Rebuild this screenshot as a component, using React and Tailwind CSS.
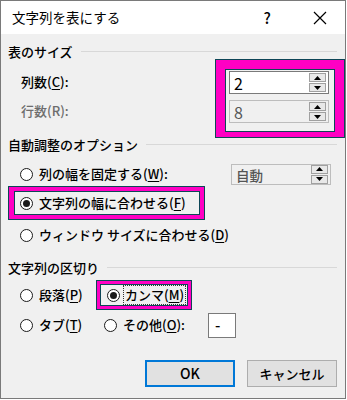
import React from "react";

const U = ({ children }) => <span className="underline underline-offset-2">{children}</span>;

function Radio({ checked }) {
  return (
    <span className="flex items-center justify-center w-[13px] h-[13px] rounded-full border-[1.5px] border-[#1a1a1a] bg-white shrink-0">
      {checked ? <span className="w-[7px] h-[7px] rounded-full bg-[#1a1a1a]" /> : null}
    </span>
  );
}

function SpinButtons() {
  return (
    <div className="flex flex-col gap-[1px] w-[17px] mr-[2px]">
      <div className="flex items-center justify-center h-[9px] border border-[#a0a0a0] bg-[#e8e8e8]">
        <svg width="7" height="4" viewBox="0 0 7 4"><polygon points="0,4 7,4 3.5,0" fill="#000" /></svg>
      </div>
      <div className="flex items-center justify-center h-[9px] border border-[#a0a0a0] bg-[#e8e8e8]">
        <svg width="7" height="4" viewBox="0 0 7 4"><polygon points="0,0 7,0 3.5,4" fill="#000" /></svg>
      </div>
    </div>
  );
}

function Spin({ value, disabled, h = "h-[23px]" }) {
  return (
    <div
      className={
        "flex items-center w-[100px] " + h + " border " +
        (disabled ? "border-[#bdbdbd] bg-[#f0f0f0] text-[#555]" : "border-[#7a7a7a] bg-white text-black")
      }
    >
      <span className="flex-1 pl-[4px] text-[16px] leading-none font-normal">{value}</span>
      <SpinButtons />
    </div>
  );
}

function GroupHeader({ children }) {
  return (
    <div className="flex items-center h-[16px] pr-[8px]">
      <span className="text-[13px] leading-none whitespace-nowrap">{children}</span>
      <span className="flex-1 h-px bg-[#d8d8d8] ml-[8px]" />
    </div>
  );
}

export default function App() {
  return (
    <div className="w-[347px] h-[400px] bg-white font-['Noto_Sans_CJK_JP',sans-serif] font-medium text-black">
      <div className="w-[346px] h-[399px] border border-[#7a7a7a] flex flex-col bg-[#f0f0f0]">
        {/* Title bar */}
        <div className="flex items-center h-[33px] bg-white shrink-0">
          <span className="pl-[11px] text-[13.5px] font-normal leading-none flex-1">文字列を表にする</span>
          <span className="text-[15px] leading-none mr-[42px]">?</span>
          <svg width="14" height="14" viewBox="0 0 14 14" className="mr-[18px]">
            <path d="M1 1 L13 13 M13 1 L1 13" stroke="#000" strokeWidth="1.2" />
          </svg>
        </div>

        {/* Body */}
        <div className="flex flex-col pl-[7px] pt-[9px]">
          <GroupHeader>表のサイズ</GroupHeader>

          <div className="flex h-[79px]">
            <div className="flex flex-col pl-[13px] w-[207px]">
              <div className="flex items-center h-[22px] mt-[12px] text-[13px]">
                列数(<U>C</U>):
              </div>
              <div className="flex items-center h-[22px] mt-[7px] text-[13px] text-[#6d6d6d]">
                行数(R):
              </div>
            </div>
            <div className="flex flex-col w-[130px] h-[79px] border border-[#0d4656] bg-[#ff00c3] pt-[9px] pl-[9px] pr-[9px] pb-[5px]">
              <div className="flex flex-col flex-1 border border-[#0d4656] bg-[#f0f0f0] pl-[3px] pt-[1px] gap-[6px]">
                <Spin value="2" />
                <Spin value="8" disabled />
              </div>
            </div>
          </div>

          <div className="mt-[-2px]">
            <GroupHeader>自動調整のオプション</GroupHeader>
          </div>

          <div className="flex items-center h-[22px] mt-[11px]">
            <div className="flex items-center gap-[6px] pl-[12px] w-[223px] text-[13px]">
              <Radio />
              <span>列の幅を固定する(<U>W</U>):</span>
            </div>
            <Spin value={<span className="text-[13.5px] font-medium">自動</span>} disabled h="h-[21px]" />
          </div>

          <div className="flex mt-[1px]">
            <div className="w-[197px] h-[34px] border border-[#0d4656] bg-[#ff00c3] p-[4px] pl-[5px]">
              <div className="flex items-center gap-[6px] h-full border border-[#0d4656] bg-[#f0f0f0] pl-[5px] text-[13px]">
                <Radio checked />
                <span>文字列の幅に合わせる(<U>F</U>)</span>
              </div>
            </div>
          </div>

          <div className="flex items-center gap-[6px] pl-[12px] h-[22px] mt-[4px] text-[13px]">
            <Radio />
            <span>ウィンドウ サイズに合わせる(<U>D</U>)</span>
          </div>

          <div className="mt-[13px]">
            <GroupHeader>文字列の区切り</GroupHeader>
          </div>

          <div className="flex items-center mt-[5px] h-[30px]">
            <div className="flex items-center gap-[6px] pl-[12px] w-[88px] text-[13px]">
              <Radio />
              <span>段落(<U>P</U>)</span>
            </div>
            <div className="w-[96px] h-[30px] border border-[#0d4656] bg-[#ff00c3] p-[3px]">
              <div className="flex items-center gap-[3px] h-full border border-[#0d4656] bg-[#f0f0f0] pl-[6px] text-[13px]">
                <Radio checked />
                <span className="border border-dotted border-[#333] px-[1px] leading-[18px]">カンマ(<U>M</U>)</span>
              </div>
            </div>
          </div>

          <div className="flex items-center h-[26px] mt-[2px]">
            <div className="flex items-center gap-[6px] pl-[12px] w-[96px] text-[13px]">
              <Radio />
              <span>タブ(<U>T</U>)</span>
            </div>
            <div className="flex items-center gap-[6px] w-[104px] text-[13px]">
              <Radio />
              <span>その他(<U>O</U>):</span>
            </div>
            <div className="flex items-center w-[28px] h-[25px] border border-[#7a7a7a] bg-white pl-[6px] text-[15px]">-</div>
          </div>

          <div className="flex justify-end gap-[12px] pr-[8px] mt-[22px]">
            <button className="w-[90px] h-[27px] border-2 border-[#0078d7] bg-[#e1e1e1] text-[14px]">OK</button>
            <button className="w-[90px] h-[27px] border border-[#adadad] bg-[#e1e1e1] text-[13px]">キャンセル</button>
          </div>
        </div>
      </div>
    </div>
  );
}
